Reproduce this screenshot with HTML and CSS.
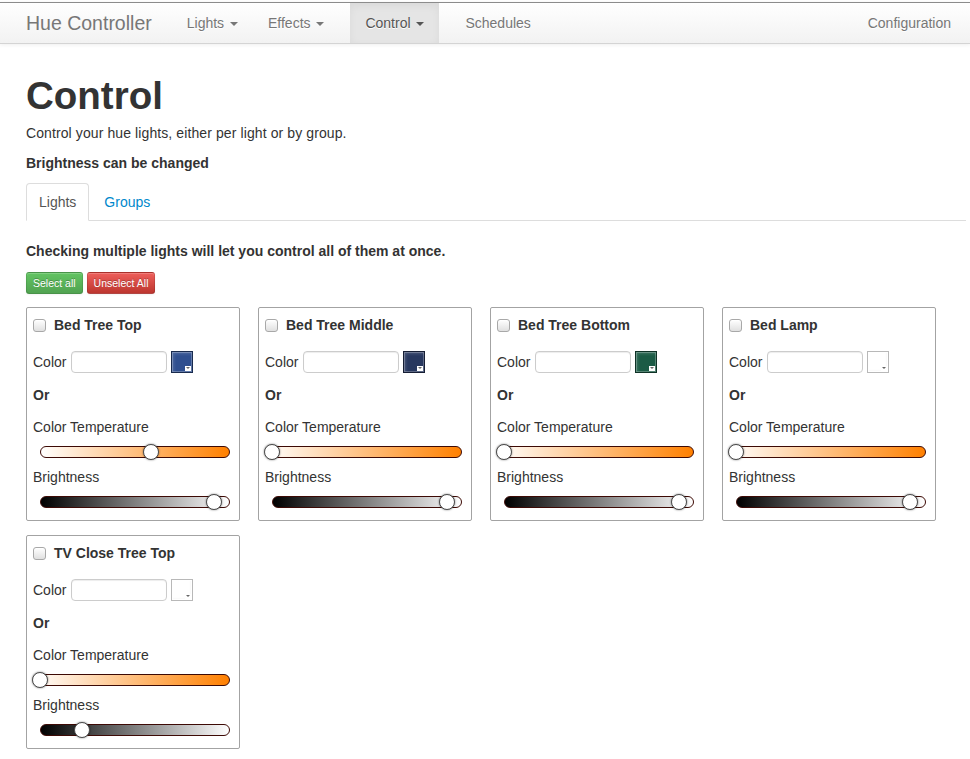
FILE: index.html
```html
<!DOCTYPE html>
<html>
<head>
<meta charset="utf-8">
<title>Hue Controller</title>
<link rel="stylesheet" href="styles.css">
</head>
<body>
<nav class="navbar">
  <a class="brand" href="#">Hue Controller</a>
  <ul class="nav">
    <li><a href="#">Lights <b class="caret"></b></a></li>
    <li><a href="#">Effects <b class="caret"></b></a></li>
    <li class="active"><a href="#">Control <b class="caret"></b></a></li>
    <li><a href="#">Schedules</a></li>
  </ul>
  <ul class="nav nav-right">
    <li><a href="#">Configuration</a></li>
  </ul>
</nav>

<main class="container">
  <h1>Control</h1>
  <p class="intro">Control your hue lights, either per light or by group.</p>
  <p class="strong">Brightness can be changed</p>

  <ul class="tabs">
    <li class="active"><a href="#">Lights</a></li>
    <li><a href="#">Groups</a></li>
  </ul>

  <p class="hint">Checking multiple lights will let you control all of them at once.</p>
  <div class="actions">
    <button class="btn btn-success">Select all</button>
    <button class="btn btn-danger">Unselect All</button>
  </div>

  <div class="lights">
    <div class="card">
      <label class="title"><input type="checkbox" class="check">Bed Tree Top</label>
      <div class="color-row"><span>Color</span><input class="color-input" type="text"><span class="swatch" style="background:#2f4f8f"><span class="swatch-arrow"></span></span></div>
      <div class="or">Or</div>
      <div class="label">Color Temperature</div>
      <div class="slider temp"><div class="track"></div><span class="knob" style="left:58.4%"></span></div>
      <div class="label">Brightness</div>
      <div class="slider bright"><div class="track"></div><span class="knob" style="left:91.4%"></span></div>
    </div>

    <div class="card">
      <label class="title"><input type="checkbox" class="check">Bed Tree Middle</label>
      <div class="color-row"><span>Color</span><input class="color-input" type="text"><span class="swatch" style="background:#28385f"><span class="swatch-arrow"></span></span></div>
      <div class="or">Or</div>
      <div class="label">Color Temperature</div>
      <div class="slider temp at-min"><div class="track"></div><span class="knob" style="left:0%"></span></div>
      <div class="label">Brightness</div>
      <div class="slider bright"><div class="track"></div><span class="knob" style="left:92%"></span></div>
    </div>

    <div class="card">
      <label class="title"><input type="checkbox" class="check">Bed Tree Bottom</label>
      <div class="color-row"><span>Color</span><input class="color-input" type="text"><span class="swatch" style="background:#1b5b45"><span class="swatch-arrow"></span></span></div>
      <div class="or">Or</div>
      <div class="label">Color Temperature</div>
      <div class="slider temp at-min"><div class="track"></div><span class="knob" style="left:0%"></span></div>
      <div class="label">Brightness</div>
      <div class="slider bright"><div class="track"></div><span class="knob" style="left:92%"></span></div>
    </div>

    <div class="card">
      <label class="title"><input type="checkbox" class="check">Bed Lamp</label>
      <div class="color-row"><span>Color</span><input class="color-input" type="text"><span class="swatch swatch-light" style="background:#ffffff"><span class="swatch-arrow"></span></span></div>
      <div class="or">Or</div>
      <div class="label">Color Temperature</div>
      <div class="slider temp at-min"><div class="track"></div><span class="knob" style="left:0%"></span></div>
      <div class="label">Brightness</div>
      <div class="slider bright"><div class="track"></div><span class="knob" style="left:91.5%"></span></div>
    </div>

    <div class="card">
      <label class="title"><input type="checkbox" class="check">TV Close Tree Top</label>
      <div class="color-row"><span>Color</span><input class="color-input" type="text"><span class="swatch swatch-light" style="background:#ffffff"><span class="swatch-arrow"></span></span></div>
      <div class="or">Or</div>
      <div class="label">Color Temperature</div>
      <div class="slider temp at-min"><div class="track"></div><span class="knob" style="left:0%"></span></div>
      <div class="label">Brightness</div>
      <div class="slider bright"><div class="track"></div><span class="knob" style="left:22%"></span></div>
    </div>
  </div>
</main>
</body>
</html>
```

FILE: styles.css
```css
html, body {
  margin: 0;
  padding: 0;
  background: #fff;
}

body {
  font-family: "Liberation Sans", Arial, sans-serif;
  font-size: 14px;
  line-height: 20px;
  color: #333;
}

/* Navbar */
.navbar {
  display: flex;
  height: 40px;
  margin-top: 2px;
  padding: 0 4px 0 26px;
  background: linear-gradient(#ffffff, #f2f2f2);
  border-top: 1px solid #8c8c8c;
  border-bottom: 1px solid #d4d4d4;
  box-shadow: 0 1px 4px rgba(0, 0, 0, 0.065);
}

.brand {
  display: block;
  padding: 10px 0;
  margin-right: 20px;
  font-size: 19.5px;
  line-height: 20px;
  color: #777;
  text-decoration: none;
}

.nav {
  display: flex;
  list-style: none;
  margin: 0;
  padding: 0;
}

.nav a {
  display: block;
  padding: 10px 15px;
  color: #777;
  text-decoration: none;
  text-shadow: 0 1px 0 #fff;
}

.nav .active {
  margin: 0 11px;
}

.nav .active a {
  background: #e5e5e5;
  color: #555;
  box-shadow: inset 0 3px 8px rgba(0, 0, 0, 0.05);
}

.nav .active .caret {
  border-top-color: #555;
}

.nav-right {
  margin-left: auto;
}

.caret {
  display: inline-block;
  width: 0;
  height: 0;
  vertical-align: top;
  margin-top: 9px;
  margin-left: 2px;
  border-top: 4px solid #777;
  border-left: 4px solid transparent;
  border-right: 4px solid transparent;
}

/* Main */
.container {
  padding: 32px 4px 0 26px;
}

h1 {
  margin: 0 0 7px;
  font-size: 38.5px;
  line-height: 40px;
  font-weight: bold;
  color: #333;
}

.intro {
  margin: 0 0 10px;
  letter-spacing: 0.1px;
}

.strong {
  margin: 0 0 10px;
  font-weight: bold;
}

/* Tabs */
.tabs {
  display: flex;
  list-style: none;
  margin: 0 0 20px;
  padding: 0;
  border-bottom: 1px solid #ddd;
}

.tabs li {
  margin-right: 2px;
  margin-bottom: -1px;
}

.tabs a {
  display: block;
  padding: 8px 12px;
  line-height: 20px;
  border: 1px solid transparent;
  border-radius: 4px 4px 0 0;
  color: #0088cc;
  text-decoration: none;
}

.tabs .active a {
  color: #555;
  background: #fff;
  border-color: #ddd #ddd transparent;
}

.hint {
  margin: 0 0 11px;
  font-weight: bold;
}

/* Buttons */
.actions {
  display: flex;
  gap: 4px;
  margin-bottom: 13px;
}

.btn {
  font-family: "Liberation Sans", Arial, sans-serif;
  font-size: 10.5px;
  line-height: 20px;
  padding: 0 6px;
  margin: 0;
  color: #fff;
  border: 1px solid rgba(0, 0, 0, 0.1);
  border-bottom-color: rgba(0, 0, 0, 0.25);
  border-radius: 3px;
  text-shadow: 0 -1px 0 rgba(0, 0, 0, 0.25);
  box-shadow: inset 0 1px 0 rgba(255, 255, 255, 0.2), 0 1px 2px rgba(0, 0, 0, 0.05);
  cursor: pointer;
}

.btn-success {
  background: linear-gradient(#62c462, #51a351);
}

.btn-danger {
  background: linear-gradient(#ee5f5b, #bd362f);
}

/* Cards */
.lights {
  display: grid;
  grid-template-columns: repeat(4, 214px);
  gap: 14px 18px;
}

.card {
  box-sizing: border-box;
  border: 1px solid #a3a3a3;
  border-radius: 2px;
  padding: 7px 6px 12px;
}

.title {
  display: flex;
  align-items: center;
  height: 20px;
  font-weight: bold;
}

.check {
  -webkit-appearance: none;
  appearance: none;
  box-sizing: border-box;
  width: 13px;
  height: 13px;
  margin: 1px 8px 0 0;
  border: 1px solid #a8a8a8;
  border-radius: 3px;
  background: linear-gradient(#ffffff, #e0e0e0);
  box-shadow: inset 0 1px 0 #fff;
}

.color-row {
  display: flex;
  align-items: center;
  height: 22px;
  margin-top: 16px;
}

.color-input {
  box-sizing: border-box;
  width: 96px;
  height: 22px;
  margin: 0 4px 0 5px;
  padding: 0 4px;
  border: 1px solid #cccccc;
  border-radius: 4px;
  background: #fff;
  box-shadow: inset 0 1px 1px rgba(0, 0, 0, 0.075);
}

.swatch {
  position: relative;
  box-sizing: border-box;
  display: block;
  width: 22px;
  height: 22px;
  border: 1px solid rgba(0, 0, 0, 0.45);
  box-shadow: inset 0 0 0 1px rgba(255, 255, 255, 0.25), inset 2px 2px 3px rgba(255, 255, 255, 0.15);
}

.swatch-light {
  border-color: rgba(0, 0, 0, 0.28);
  box-shadow: inset 0 0 0 1px #fff, inset -1px -1px 2px rgba(0, 0, 0, 0.08);
}

.swatch-arrow {
  position: absolute;
  right: 1px;
  bottom: 1px;
  width: 6px;
  height: 5px;
  background: #fff;
}

.swatch-arrow::after {
  content: "";
  position: absolute;
  left: 1px;
  top: 1px;
  border-top: 2px solid #666;
  border-left: 2px solid transparent;
  border-right: 2px solid transparent;
}

.or {
  margin-top: 12px;
  font-weight: bold;
}

.label {
  margin-top: 12px;
}

.slider + .label {
  margin-top: 9px;
}

/* Sliders */
.slider {
  position: relative;
  margin: 9px 3px 0 7px;
}

.track {
  height: 10px;
  border: 1px solid #3d0a05;
  border-radius: 6px;
}

.slider.at-min .track {
  margin-left: -7px;
}

.temp .track {
  background: linear-gradient(to right, #ffffff, #ff8000);
}

.bright .track {
  background: linear-gradient(to right, #000000, #ffffff);
}

.knob {
  position: absolute;
  top: 50%;
  box-sizing: border-box;
  width: 16px;
  height: 16px;
  border: 1px solid #4a4a4a;
  border-radius: 50%;
  background: #fff;
  transform: translate(-50%, -50%);
  box-shadow: 0 0 2px rgba(0, 0, 0, 0.55);
}
```
